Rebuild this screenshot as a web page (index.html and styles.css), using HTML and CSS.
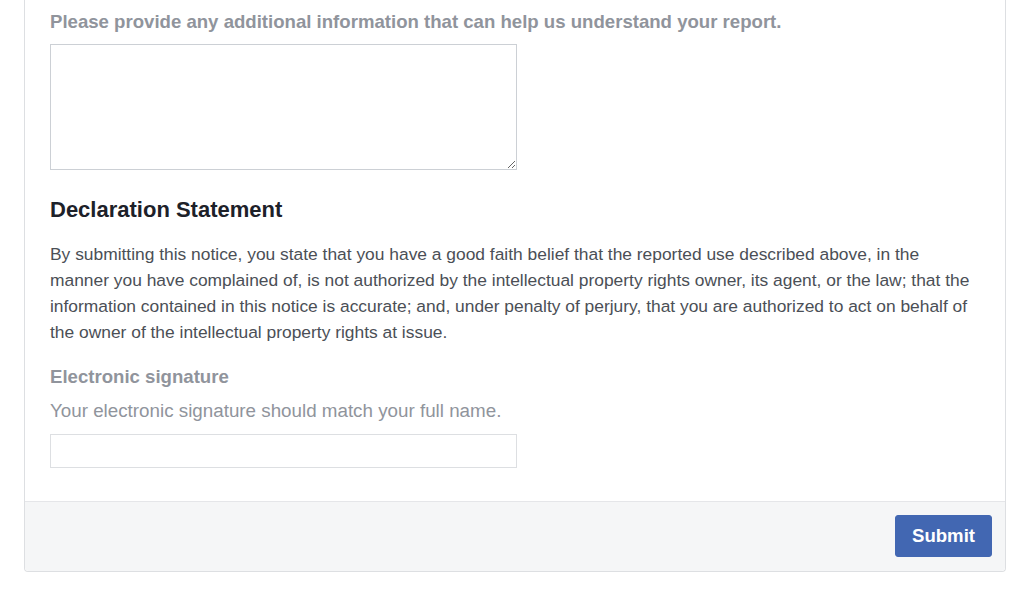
FILE: index.html
```html
<!DOCTYPE html>
<html>
<head>
<meta charset="utf-8">
<link rel="stylesheet" href="styles.css">
</head>
<body>
<div class="card">
  <div class="card-body">
    <label class="label first">Please provide any additional information that can help us understand your report.</label>
    <textarea class="textarea"></textarea>
    <h2 class="heading">Declaration Statement</h2>
    <p class="para">By submitting this notice, you state that you have a good faith belief that the reported use described above, in the manner you have complained of, is not authorized by the intellectual property rights owner, its agent, or the law; that the information contained in this notice is accurate; and, under penalty of perjury, that you are authorized to act on behalf of the owner of the intellectual property rights at issue.</p>
    <label class="label sig">Electronic signature</label>
    <div class="help">Your electronic signature should match your full name.</div>
    <input class="input" type="text">
  </div>
  <div class="card-footer">
    <button class="btn">Submit</button>
  </div>
</div>
</body>
</html>
```
FILE: styles.css
```css
html, body {
  margin: 0;
  padding: 0;
  background: #ffffff;
  font-family: "Liberation Sans", Arial, Helvetica, sans-serif;
}
.card {
  margin-left: 24px;
  width: 980px;
  border: 1px solid #dddfe2;
  border-top: none;
  border-radius: 0 0 4px 4px;
  background: #ffffff;
}
.card-body {
  padding: 12px 0 33px 25px;
  display: flex;
  flex-direction: column;
  align-items: flex-start;
}
.label {
  display: block;
  font-size: 18.6px;
  font-weight: bold;
  line-height: 20px;
  color: #90949c;
}
.textarea {
  margin: 12px 0 0 0;
  width: 467px;
  height: 126px;
  box-sizing: border-box;
  border: 1px solid #ccd0d5;
  padding: 4px;
  font-family: inherit;
  font-size: 16px;
}
.heading {
  margin: 28px 0 0 0;
  font-size: 22px;
  line-height: 24px;
  font-weight: bold;
  color: #1d2129;
}
.para {
  margin: 19px 0 0 0;
  width: 920px;
  font-size: 17.4px;
  line-height: 26px;
  color: #4b4f56;
}
.sig {
  margin-top: 22px;
}
.help {
  margin-top: 14px;
  font-size: 18.8px;
  line-height: 20px;
  color: #90949c;
}
.input {
  margin: 13px 0 0 0;
  width: 467px;
  height: 34px;
  box-sizing: border-box;
  border: 1px solid #dddfe2;
  padding: 4px 6px;
  font-family: inherit;
  font-size: 16px;
}
.card-footer {
  border-top: 1px solid #e5e6e9;
  background: #f5f6f7;
  padding: 13px 13px 14px 0;
  display: flex;
  justify-content: flex-end;
  border-radius: 0 0 4px 4px;
}
.btn {
  width: 97px;
  height: 42px;
  background: #4267b2;
  border: 1px solid #4267b2;
  border-radius: 3px;
  color: #ffffff;
  font-family: inherit;
  font-size: 18.6px;
  font-weight: bold;
  padding: 0;
}
```
